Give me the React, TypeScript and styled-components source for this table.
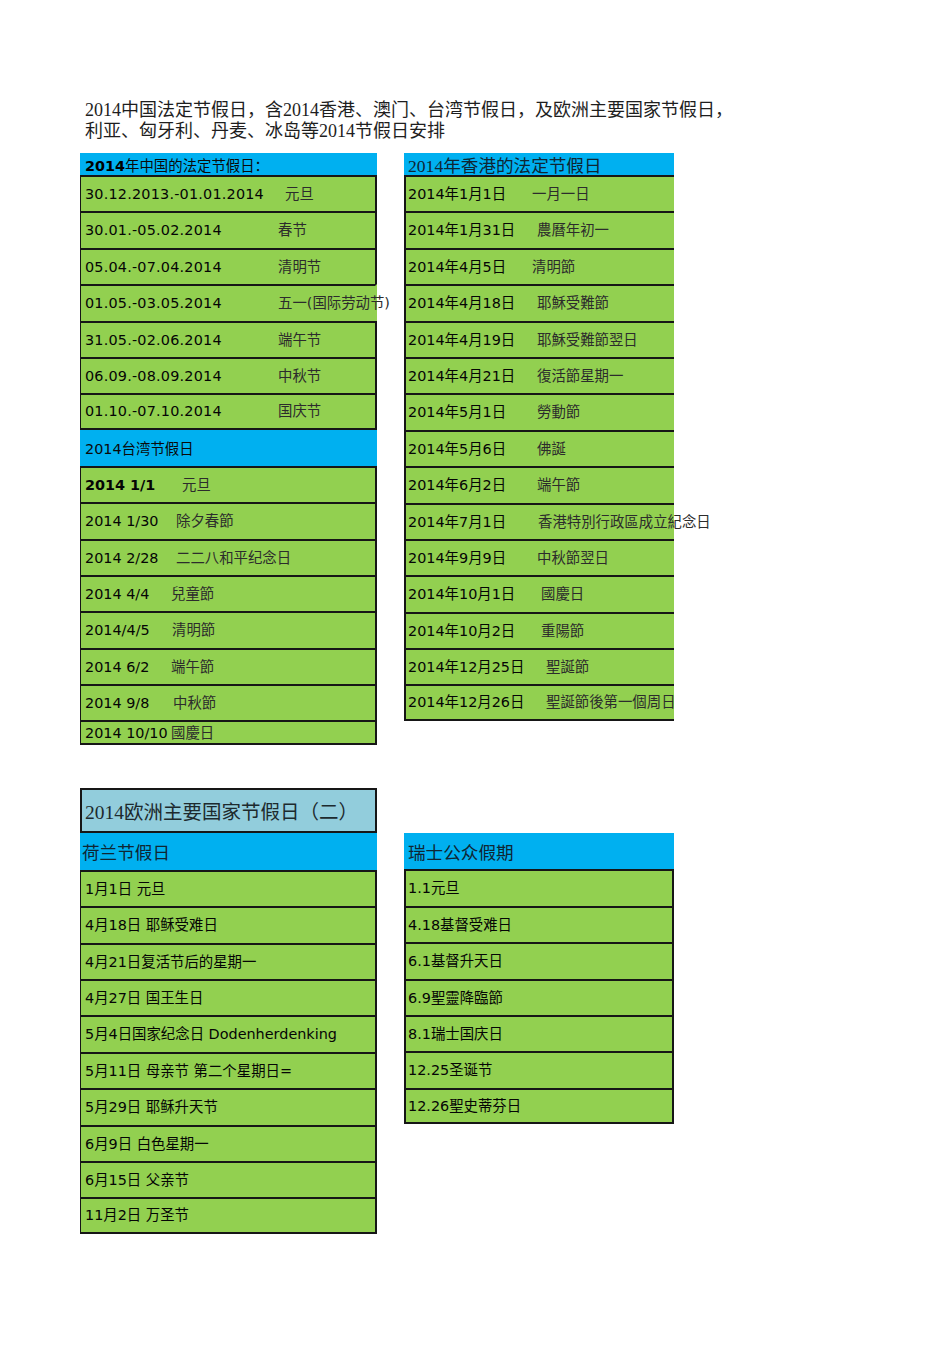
import React from 'react';
import styled, { createGlobalStyle } from 'styled-components';

const GREEN = '#92D050';
const BLUE = '#00B0F0';
const PALE = '#92CDDC';
const LINE = '#161616';
const ROW_H = 36.4;

const Global = createGlobalStyle`
  html, body { margin: 0; padding: 0; background: #ffffff; }
  body { width: 950px; min-height: 1345px; }
`;

const Page = styled.main`
  box-sizing: border-box;
  width: 950px;
  min-height: 1345px;
  padding: 100px 0 0 80px;
  font-family: "DejaVu Sans", "Noto Sans CJK SC", sans-serif;
  font-size: 14.4px;
  color: #000;
`;

const Intro = styled.p`
  margin: 0 0 11px 5px;
  font-family: "Liberation Serif", "Noto Sans CJK SC", serif;
  font-size: 18px;
  line-height: 21px;
  color: #1e1e1e;
  white-space: nowrap;

  & > span { display: block; }
`;

const Board = styled.div`
  display: grid;
  grid-template-columns: 297px 270px;
  column-gap: 27px;
  align-items: start;
`;

const Lower = styled.div`
  margin-top: 43px;
  display: grid;
  grid-template-columns: 297px 270px;
  grid-template-areas:
    "title ."
    "nl ch";
  column-gap: 27px;
  align-items: start;
`;

const Column = styled.section<{ $area?: string }>`
  display: flex;
  flex-direction: column;
  grid-area: ${p => p.$area ?? 'auto'};
`;

const Band = styled.div<{ $h: number; $pad: number; $serif?: boolean }>`
  box-sizing: border-box;
  height: ${p => p.$h}px;
  display: flex;
  align-items: center;
  padding-left: ${p => p.$pad}px;
  background: ${BLUE};
  white-space: nowrap;
  overflow: hidden;
  font-family: ${p =>
    p.$serif
      ? '"Liberation Serif", "Noto Sans CJK SC", serif'
      : '"DejaVu Sans", "Noto Sans CJK SC", sans-serif'};
  font-size: ${p => (p.$serif ? '17.6px' : '14.4px')};
  color: ${p => (p.$serif ? '#0f2633' : '#0a0a0a')};

  & b { font-weight: 700; color: #000; }
`;

const EuroTitle = styled.div`
  grid-area: title;
  box-sizing: border-box;
  height: 45px;
  display: flex;
  align-items: center;
  padding-left: 3px;
  background: ${PALE};
  border: 2px solid ${LINE};
  font-family: "Liberation Serif", "Noto Sans CJK SC", serif;
  font-size: 19.5px;
  color: #1d2a2e;
  white-space: nowrap;
`;

const Stack = styled.div<{ $l: number; $r: number; $pad: number }>`
  display: flex;
  flex-direction: column;

  & > div {
    border-left: ${p => p.$l}px solid ${LINE};
    border-right: ${p => p.$r}px solid ${LINE};
    padding-left: ${p => p.$pad}px;
  }
  & > div:last-child {
    border-bottom: 2px solid ${LINE};
  }
`;

const Row = styled.div<{ $at?: number; $h?: number; $open?: boolean }>`
  box-sizing: border-box;
  height: ${p => p.$h ?? ROW_H}px;
  display: grid;
  grid-template-columns: ${p => (p.$at ? `${p.$at}px max-content` : 'max-content')};
  align-items: center;
  background: ${GREEN};
  border-top: 2px solid ${LINE};
  white-space: nowrap;
  line-height: 1;

  && {
    border-right-color: ${p => (p.$open ? GREEN : LINE)};
  }

  & b { font-weight: 700; }
`;

const When = styled.span<{ $wide?: boolean }>`
  color: #050505;
  letter-spacing: ${p => (p.$wide ? '0.2px' : '0')};
`;

const Label = styled.span`
  color: #2c2c2c;
`;

type Item = { d: React.ReactNode; l: string; at: number; open?: boolean; h?: number };

const china: Item[] = [
  { d: '30.12.2013.-01.01.2014', l: '元旦', at: 200 },
  { d: '30.01.-05.02.2014', l: '春节', at: 193 },
  { d: '05.04.-07.04.2014', l: '清明节', at: 193 },
  { d: '01.05.-03.05.2014', l: '五一(国际劳动节)', at: 193, open: true },
  { d: '31.05.-02.06.2014', l: '端午节', at: 193 },
  { d: '06.09.-08.09.2014', l: '中秋节', at: 193 },
  { d: '01.10.-07.10.2014', l: '国庆节', at: 193 },
];

const taiwan: Item[] = [
  { d: <b>2014 1/1</b>, l: '元旦', at: 97 },
  { d: '2014 1/30', l: '除夕春節', at: 91 },
  { d: '2014 2/28', l: '二二八和平纪念日', at: 91 },
  { d: '2014 4/4', l: '兒童節', at: 86 },
  { d: '2014/4/5', l: '清明節', at: 87 },
  { d: '2014 6/2', l: '端午節', at: 86 },
  { d: '2014 9/8', l: '中秋節', at: 88 },
  { d: '2014 10/10', l: '國慶日', at: 86, h: 25 },
];

const hongkong: Item[] = [
  { d: '2014年1月1日', l: '一月一日', at: 124 },
  { d: '2014年1月31日', l: '農曆年初一', at: 129 },
  { d: '2014年4月5日', l: '清明節', at: 124 },
  { d: '2014年4月18日', l: '耶穌受難節', at: 129 },
  { d: '2014年4月19日', l: '耶穌受難節翌日', at: 129 },
  { d: '2014年4月21日', l: '復活節星期一', at: 129 },
  { d: '2014年5月1日', l: '勞動節', at: 129 },
  { d: '2014年5月6日', l: '佛誕', at: 129 },
  { d: '2014年6月2日', l: '端午節', at: 129 },
  { d: '2014年7月1日', l: '香港特別行政區成立紀念日', at: 130 },
  { d: '2014年9月9日', l: '中秋節翌日', at: 129 },
  { d: '2014年10月1日', l: '國慶日', at: 133 },
  { d: '2014年10月2日', l: '重陽節', at: 133 },
  { d: '2014年12月25日', l: '聖誕節', at: 138 },
  { d: '2014年12月26日', l: '聖誕節後第一個周日', at: 138 },
];

const netherlands: string[] = [
  '1月1日 元旦',
  '4月18日 耶稣受难日',
  '4月21日复活节后的星期一',
  '4月27日 国王生日',
  '5月4日国家纪念日 Dodenherdenking',
  '5月11日 母亲节 第二个星期日=',
  '5月29日 耶稣升天节',
  '6月9日 白色星期一',
  '6月15日 父亲节',
  '11月2日 万圣节',
];

const swiss: string[] = [
  '1.1元旦',
  '4.18基督受难日',
  '6.1基督升天日',
  '6.9聖靈降臨節',
  '8.1瑞士国庆日',
  '12.25圣诞节',
  '12.26聖史蒂芬日',
];

const Pairs = ({ items, wide }: { items: Item[]; wide?: boolean }) => (
  <>
    {items.map((it, i) => (
      <Row key={i} $at={it.at} $open={it.open} $h={it.h}>
        <When $wide={wide}>{it.d}</When>
        <Label>{it.l}</Label>
      </Row>
    ))}
  </>
);

const Lines = ({ items }: { items: string[] }) => (
  <>
    {items.map((t, i) => (
      <Row key={i}>
        <When>{t}</When>
      </Row>
    ))}
  </>
);

export default function App() {
  return (
    <>
      <Global />
      <Page>
        <Intro>
          <span>2014中国法定节假日，含2014香港、澳门、台湾节假日，及欧洲主要国家节假日，</span>
          <span>利亚、匈牙利、丹麦、冰岛等2014节假日安排</span>
        </Intro>

        <Board>
          <Column>
            <Band $h={22} $pad={5}>
              <span>
                <b>2014</b>年中国的法定节假日：
              </span>
            </Band>
            <Stack $l={1} $r={2} $pad={4}>
              <Pairs items={china} wide />
            </Stack>
            <Band $h={36} $pad={5}>
              2014台湾节假日
            </Band>
            <Stack $l={1} $r={2} $pad={4}>
              <Pairs items={taiwan} />
            </Stack>
          </Column>

          <Column>
            <Band $h={22} $pad={4} $serif>
              2014年香港的法定节假日
            </Band>
            <Stack $l={2} $r={0} $pad={2}>
              <Pairs items={hongkong} />
            </Stack>
          </Column>
        </Board>

        <Lower>
          <EuroTitle>2014欧洲主要国家节假日（二）</EuroTitle>
          <Column $area="nl">
            <Band $h={36.4} $pad={2} $serif>
              荷兰节假日
            </Band>
            <Stack $l={1} $r={2} $pad={4}>
              <Lines items={netherlands} />
            </Stack>
          </Column>
          <Column $area="ch">
            <Band $h={36} $pad={4} $serif>
              瑞士公众假期
            </Band>
            <Stack $l={2} $r={2} $pad={2}>
              <Lines items={swiss} />
            </Stack>
          </Column>
        </Lower>
      </Page>
    </>
  );
}
